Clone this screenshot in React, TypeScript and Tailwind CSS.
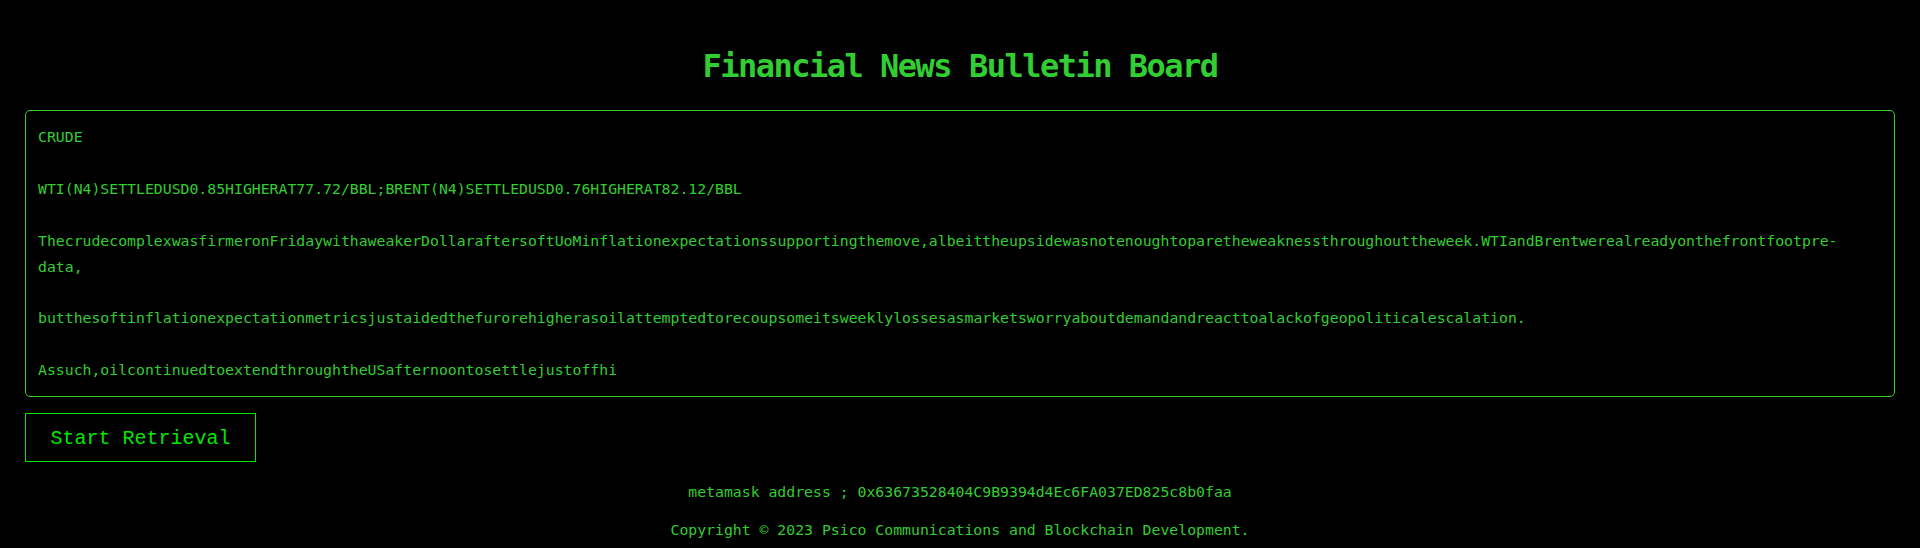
import React from 'react';

const paragraphs: string[] = [
  'CRUDE',
  'WTI(N4)SETTLEDUSD0.85HIGHERAT77.72/BBL;BRENT(N4)SETTLEDUSD0.76HIGHERAT82.12/BBL',
  'ThecrudecomplexwasfirmeronFridaywithaweakerDollaraftersoftUoMinflationexpectationssupportingthemove,albeittheupsidewasnotenoughtoparetheweaknessthroughouttheweek.WTIandBrentwerealreadyonthefrontfootpre-data,',
  'butthesoftinflationexpectationmetricsjustaidedthefurorehigherasoilattemptedtorecoupsomeitsweeklylossesasmarketsworryaboutdemandandreacttoalackofgeopoliticalescalation.',
  'Assuch,oilcontinuedtoextendthroughtheUSafternoontosettlejustoffhi',
];

const App: React.FC = () => {
  const [running, setRunning] = React.useState(false);

  return (
    <div className="min-h-screen bg-black px-[25px] font-['DejaVu_Sans_Mono',monospace] text-[#32cd32]">
      {/* Header */}
      <h1 className="pt-[48px] text-center text-[32px] font-bold leading-[37px] tracking-[-1.5px]">
        Financial News Bulletin Board
      </h1>

      {/* News feed */}
      <div className="mt-[25px] rounded-[5px] border border-[#32cd32] px-[12px] py-[13px] text-[14.8px] leading-[25.9px]">
        {paragraphs.map((p, idx) => (
          <p key={idx} className={idx < paragraphs.length - 1 ? 'mb-[25.9px]' : ''}>
            {p}
          </p>
        ))}
      </div>

      <button
        onClick={() => setRunning(r => !r)}
        className="mt-[16px] flex h-[49px] w-[231px] items-center justify-center border border-[#00e600] pt-[2px] font-['Liberation_Mono',monospace] text-[20px] text-[#00e600]"
      >
        {running ? 'Stop Retrieval' : 'Start Retrieval'}
      </button>

      {/* Footer */}
      <div className="mt-[17px] text-center text-[14.8px] leading-[25.9px]">
        <p>metamask address ; 0x63673528404C9B9394d4Ec6FA037ED825c8b0faa</p>
        <p className="mt-[12px]">Copyright © 2023 Psico Communications and Blockchain Development.</p>
      </div>
    </div>
  );
};

export default App;
